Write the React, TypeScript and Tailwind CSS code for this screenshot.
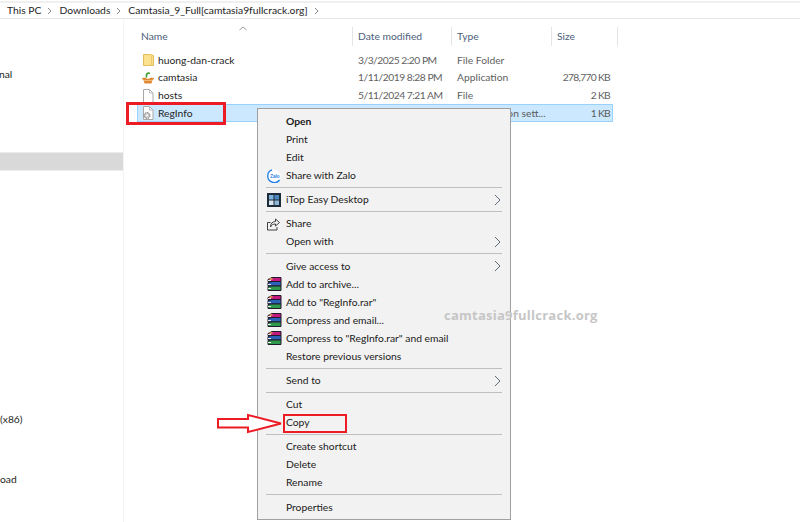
import React from "react";

const files = [
  { name: "huong-dan-crack", icon: "folder", date: "3/3/2025 2:20 PM", type: "File Folder", size: "" },
  { name: "camtasia", icon: "app", date: "1/11/2019 8:28 PM", type: "Application", size: "278,770 KB" },
  { name: "hosts", icon: "file", date: "5/11/2024 7:21 AM", type: "File", size: "2 KB" },
  { name: "RegInfo", icon: "reg", date: "", type: "Configuration sett...", size: "1 KB" },
];

const menu = [
  [
    { label: "Open", bold: true },
    { label: "Print" },
    { label: "Edit" },
    { label: "Share with Zalo", icon: "zalo" },
  ],
  [{ label: "iTop Easy Desktop", icon: "itop", sub: true }],
  [{ label: "Share", icon: "share" }, { label: "Open with", sub: true }],
  [
    { label: "Give access to", sub: true },
    { label: "Add to archive...", icon: "rar" },
    { label: 'Add to "RegInfo.rar"', icon: "rar" },
    { label: "Compress and email...", icon: "rar" },
    { label: 'Compress to "RegInfo.rar" and email', icon: "rar" },
    { label: "Restore previous versions" },
  ],
  [{ label: "Send to", sub: true }],
  [{ label: "Cut" }, { label: "Copy" }],
  [{ label: "Create shortcut" }, { label: "Delete" }, { label: "Rename" }],
  [{ label: "Properties" }],
];

function FileIcon({ icon }: { icon: string }) {
  if (icon === "folder") {
    return (
      <svg width="13" height="14" viewBox="0 0 13 14">
        <path d="M1.5 1.5h7l3 1v10h-10z" fill="#fbe08e" stroke="#e2bd5c" />
        <path d="M9.5 2.5v10" stroke="#eccb72" />
      </svg>
    );
  }
  if (icon === "app") {
    return (
      <svg width="14" height="14" viewBox="0 0 14 14">
        <path d="M9 2.500C6.500 1 5 3 5.500 6.500" fill="none" stroke="#3f9a2c" strokeWidth="1.600" />
        <path d="M.5 7.500l3-1 3.500 1.500 3.500-1.500 3 1-2 1.500-1 3.500h-7l-1-3.500z" fill="#de8a34" />
        <path d="M3 9.500h8" stroke="#f3b873" />
      </svg>
    );
  }
  return (
    <svg width="12" height="14" viewBox="0 0 12 14">
      <path d="M1.500.5h6l3.500 3.500v9.500h-9.500z" fill="#fff" stroke="#a9a9a9" />
      <path d="M7.500.5v3.500h3.500" fill="none" stroke="#bdbdbd" />
      {icon === "reg" && (
        <g>
          <circle cx="5" cy="9.500" r="3" fill="#c9c9c9" stroke="#7d7d7d" strokeDasharray="1.500 .8" />
          <circle cx="5" cy="9.500" r="1" fill="#fff" />
        </g>
      )}
    </svg>
  );
}

function MenuIcon({ icon }: { icon?: string }) {
  if (icon === "zalo") {
    return (
      <svg width="14" height="14" viewBox="0 0 14 14">
        <circle cx="7" cy="7" r="6.500" fill="#fff" />
        <path d="M5 .9A6.500 6.500 0 0 0 5 13.100M5 13.100A6.500 6.500 0 0 0 12.500 11" fill="none" stroke="#1f7ee8" strokeWidth="1.300" />
        <text x="3.200" y="8.700" fontSize="4.600" fontWeight="700" fill="#2a80e0" fontFamily="Liberation Sans, sans-serif">Zalo</text>
      </svg>
    );
  }
  if (icon === "itop") {
    return (
      <svg width="14" height="14" viewBox="0 0 14 14">
        <rect width="14" height="14" fill="#1d2a38" />
        <rect x="2" y="2" width="4.500" height="4.500" fill="#7fb2dc" />
        <rect x="7.500" y="2" width="4.500" height="4.500" fill="#4a86bd" />
        <rect x="2" y="7.500" width="4.500" height="4.500" fill="#d9e6f0" />
        <rect x="7.500" y="7.500" width="4.500" height="4.500" fill="#8fb8d8" />
      </svg>
    );
  }
  if (icon === "share") {
    return (
      <svg width="13" height="13" viewBox="0 0 13 13" fill="none" stroke="#3f3f3f">
        <path d="M3.500 4.500h-3v7.500h9.500v-3" />
        <path d="M8.500 1l4 3.500-4 3.500v-2c-2.500 0-4 .8-5 3 0-3.500 2-5.500 5-5.500z" />
      </svg>
    );
  }
  if (icon === "rar") {
    return (
      <svg width="15" height="14" viewBox="0 0 15 14">
        <path d="M1 2.500l4-2h9v4h-13z" fill="#c2187f" stroke="#231a2a" />
        <path d="M2.500 2h3" stroke="#f4d23c" strokeWidth="1.200" />
        <path d="M1 5.500l4-1h9v4.500h-13z" fill="#2c62b8" stroke="#231a2a" />
        <path d="M1 9.500l4-.5h9v4.500h-13z" fill="#2f9a4c" stroke="#231a2a" />
        <path d="M1 3.500h3M1 7.500h3M1 11.500h3" stroke="#e8e8e8" />
      </svg>
    );
  }
  return null;
}

function Crumb({ label }: { label: string }) {
  return (
    <div className="flex items-center gap-[6px]">
      <span className="text-[#1e1e1e]">{label}</span>
      <svg width="5" height="8" viewBox="0 0 5 8" fill="none" stroke="#8a8a8a">
        <path d="M1 1l3 3-3 3" />
      </svg>
    </div>
  );
}

export default function App() {
  return (
    <div className="relative flex h-[522px] w-[800px] flex-col overflow-hidden bg-white font-['Lato',sans-serif] text-[10.300px]">
      {/* address bar */}
      <div className="mt-[1px] flex h-[18px] items-center gap-[7px] border-t-2 border-b border-t-[#f0f0f0] border-b-[#e6e6e6] pl-[7px]">
        <Crumb label="This PC" />
        <Crumb label="Downloads" />
        <Crumb label="Camtasia_9_Full[camtasia9fullcrack.org]" />
      </div>

      <div className="flex flex-1">
        {/* nav pane, text is clipped on the left */}
        <div className="flex w-[124px] flex-col border-r border-[#f4f4f4] text-[#1e1e1e]">
          <div className="mt-[47px] flex h-[18px] items-center overflow-hidden">
            <span className="-ml-[1px]">nal</span>
          </div>
          <div className="mt-[68px] h-[19px] border-y border-[#ececec] bg-[#d9d9d9]" />
          <div className="mt-[240px] flex h-[18px] items-center overflow-hidden">
            <span className="text-[#1e1e1e]">(x86)</span>
          </div>
          <div className="mt-[42px] flex h-[18px] items-center overflow-hidden">
            <span>oad</span>
          </div>
        </div>

        {/* file list */}
        <div className="flex-1 pl-[13px]">
          <div className="relative mt-[8px] flex h-[19px] text-[#4c607a]">
            <svg className="absolute left-[102px] top-[-1px]" width="8" height="5" viewBox="0 0 8 5" fill="none" stroke="#9a9a9a">
              <path d="M.5 4L4 1l3.500 3" />
            </svg>
            <div className="flex w-[216px] items-center border-r border-[#e5e5e5] pl-[4px]">Name</div>
            <div className="flex w-[99px] items-center border-r border-[#e5e5e5] pl-[5px]">Date modified</div>
            <div className="flex w-[100px] items-center border-r border-[#e5e5e5] pl-[5px]">Type</div>
            <div className="flex w-[66px] items-center border-r border-[#e5e5e5] pl-[5px]">Size</div>
          </div>
          <div className="mt-[5.500px] w-[476px]">
            {files.map((f) => (
              <div
                key={f.name}
                className={
                  f.name === "RegInfo"
                    ? "flex h-[18px] items-center border border-[#99d1ff] bg-[#cce8ff] text-[#5a5a5a]"
                    : "flex h-[17.670px] items-center border border-transparent text-[#5f5f5f]"
                }
              >
                <div className="flex w-[215px] items-center gap-[3px] pl-[3px] text-[#1e1e1e]">
                  <span className="flex w-[14px] justify-center">
                    <FileIcon icon={f.icon} />
                  </span>
                  {f.name}
                </div>
                <div className="w-[99px] whitespace-nowrap pl-[5px] tracking-[-0.5px]">{f.date}</div>
                <div className="w-[94px] whitespace-nowrap pl-[5px]">{f.type}</div>
                <div className="w-[66px] pr-[2px] text-right tracking-[-0.7px]">{f.size}</div>
              </div>
            ))}
          </div>
        </div>
      </div>

      {/* context menu */}
      <div className="absolute left-[257px] top-[108px] w-[254px] border border-[#a0a0a0] bg-[#f2f2f2] pt-[3.500px] pb-[2.500px] text-[#1a1a1a]">
        {menu.map((group, i) => (
          <div key={i} className={i > 0 ? "mx-[8px] mt-[2.280px] border-t border-[#bfbfbf] pt-[3px]" : "mx-[8px]"}>
            {group.map((item) => (
              <div key={item.label} className="flex h-[18px] items-center">
                <span className="flex w-[20px] items-center justify-start pl-[1px]">
                  <MenuIcon icon={item.icon} />
                </span>
                <span className={item.bold ? "flex-1 font-bold" : "flex-1"}>{item.label}</span>
                {item.sub && (
                  <svg className="mr-[1px]" width="7" height="12" viewBox="0 0 7 12" fill="none" stroke="#5f6b78">
                    <path d="M1 1l5 5-5 5" />
                  </svg>
                )}
              </div>
            ))}
          </div>
        ))}
      </div>

      {/* annotations laid over the screenshot */}
      <div className="absolute left-[126px] top-[102px] h-[23px] w-[100px] border-[3px] border-[#ed1c24]" />
      <div className="absolute left-[283px] top-[414px] h-[19px] w-[64px] border-2 border-[#ed1c24]" />
      <svg className="absolute left-[216px] top-[413px]" width="68" height="21" viewBox="0 0 68 21" fill="#fff" stroke="#ed1c24" strokeWidth="2">
        <path d="M2 6h30V2l33 8.500L32 19v-4.500H2z" />
      </svg>
      <div className="absolute left-[444px] top-[306px] font-['Open_Sans',sans-serif] text-[13px] font-bold tracking-[0.25px] text-[#c6c6c6]">
        camtasia9fullcrack.org
      </div>
    </div>
  );
}
